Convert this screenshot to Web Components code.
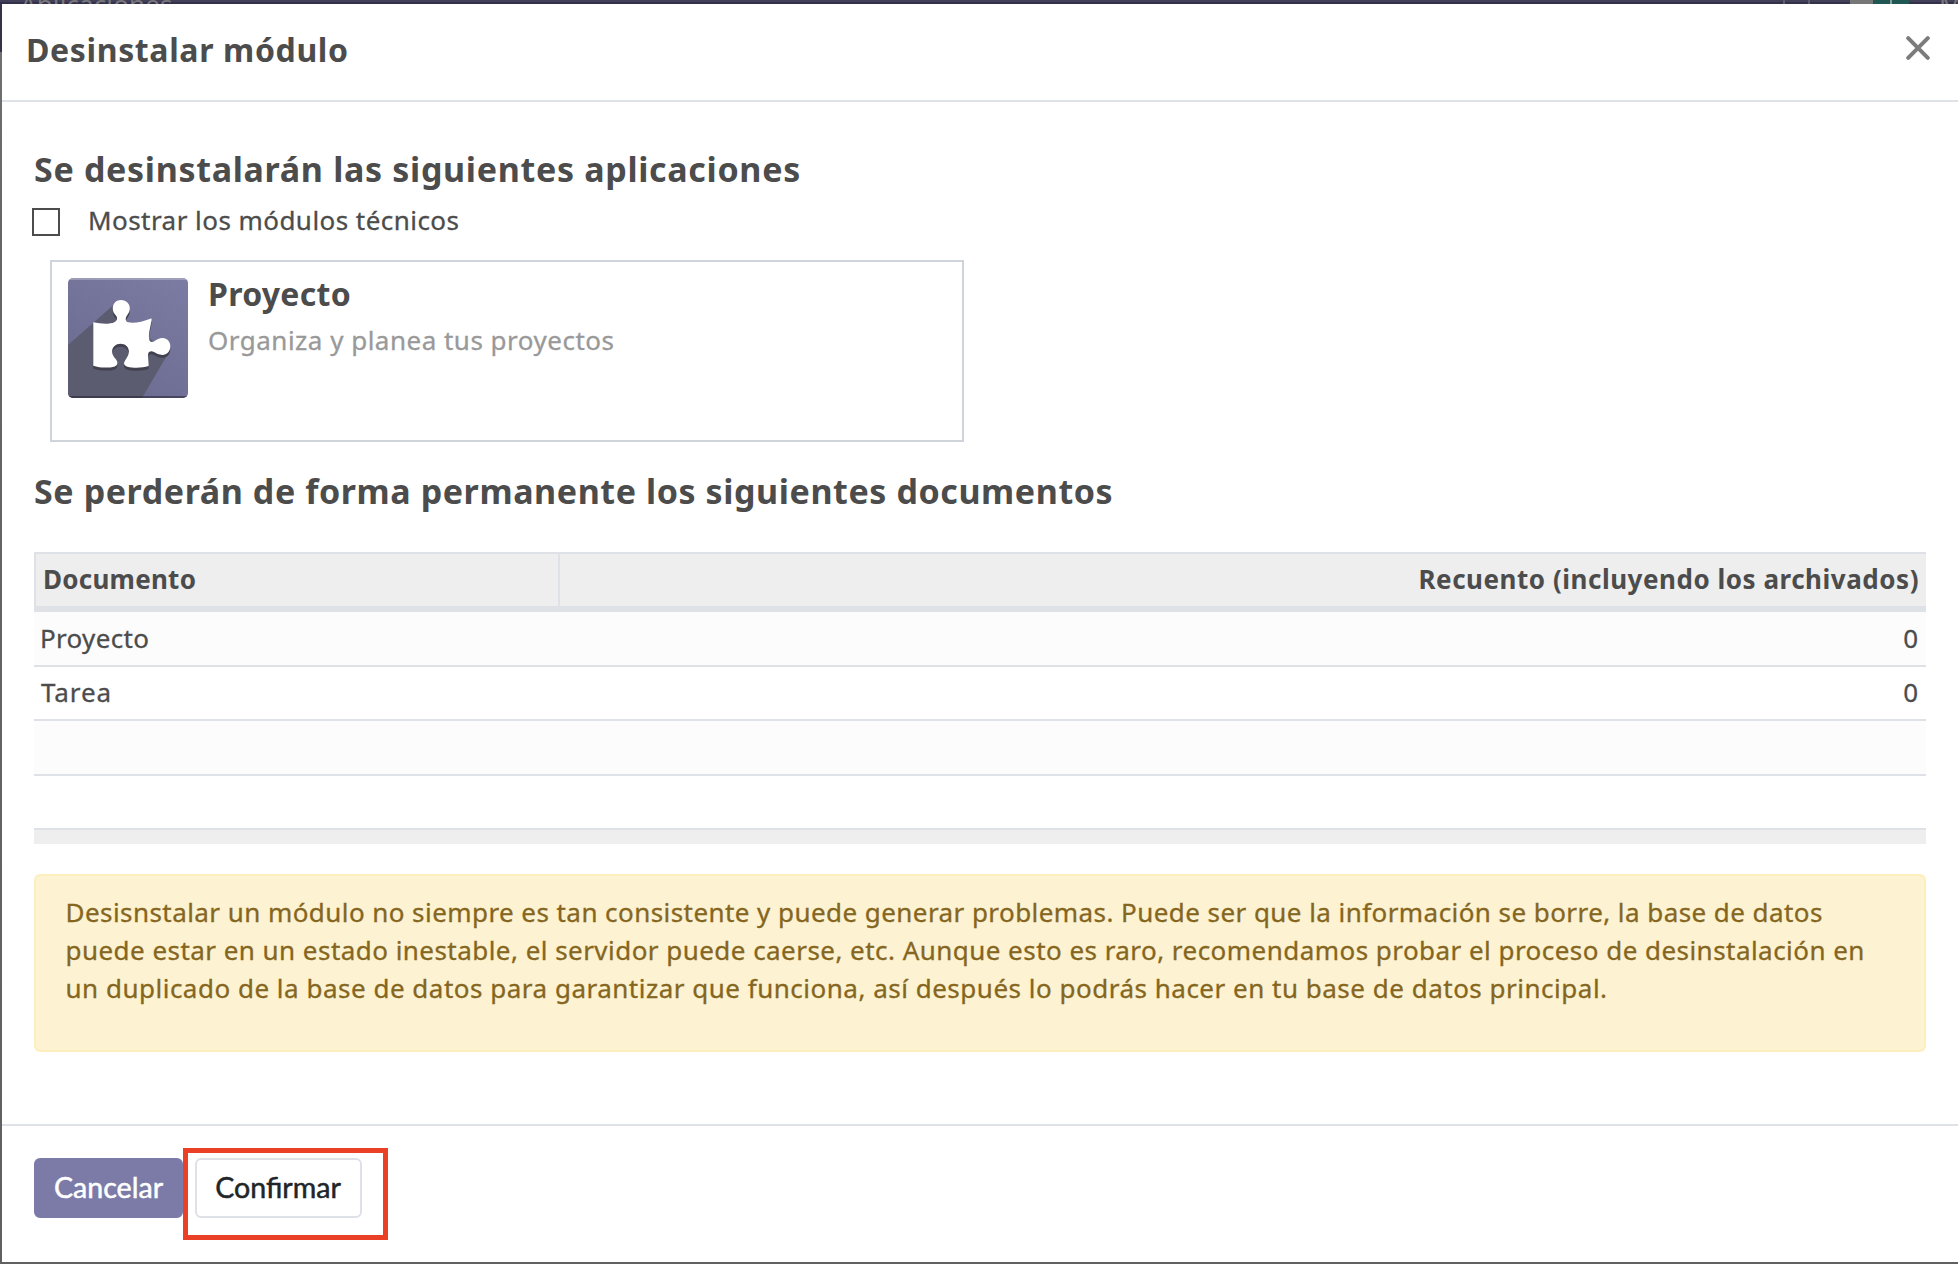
<!DOCTYPE html>
<html lang="es">
<head>
<meta charset="utf-8">
<title>Desinstalar módulo</title>
<style>
html,body{margin:0;height:100%;overflow:hidden}
body{font:26px "Noto Sans","Open Sans",sans-serif;color:#4c4c4c;background:#666}
</style>
</head>
<body>
<uninstall-page></uninstall-page>
<script>
const define = (name, html, setup) => {
  const tpl = document.createElement('template');
  tpl.innerHTML = html;
  customElements.define(name, class extends HTMLElement {
    constructor() {
      super();
      this.attachShadow({mode: 'open'}).append(tpl.content.cloneNode(true));
    }
    connectedCallback() { if (setup) setup(this, this.shadowRoot); }
  });
};

define('app-navbar', `
<style>
:host{display:flex;height:4px;overflow:hidden;background:linear-gradient(#423f59 50%,#33304a 50%);color:#77767a;font-size:26px;line-height:26px}
.brand{margin:-9px 0 0 20px;letter-spacing:.115px;flex:1}
.bits{width:27px;height:4px;border:solid #5d5b6c;border-width:0 2px;box-sizing:border-box;margin-right:40px}
.avatar{width:23px;background:#777}
.badge{width:36px;background:#215753;display:flex;justify-content:center;color:#8b9c9a}
.badge i{width:2px;height:3px;background:#8b9c9a;border-bottom:1px solid #8b9c9a}
.user{margin:-9px 0 0 30px;width:19px;overflow:hidden;white-space:nowrap}
</style>
<div class="brand">Aplicaciones</div><div class="bits"></div><div class="avatar"></div><div class="badge"><i></i></div><div class="user">M</div>`);

define('close-icon', `
<style>:host{display:block;width:24px;height:24px}svg{display:block}</style>
<svg width="24" height="24" viewBox="0 0 24 24"><path d="M2.2 2.2 21.8 21.8M21.8 2.2 2.2 21.8" stroke="#7c7c7c" stroke-width="4" stroke-linecap="round"/></svg>`);

define('puzzle-icon', `
<style>:host{display:block;width:120px;height:120px;flex:none}svg{display:block}</style>
<svg width="120" height="120" viewBox="0 0 120 120">
<defs>
<linearGradient id="g" x1="1" y1="0" x2="0.4" y2="1"><stop offset="0" stop-color="#7c7ba3"/><stop offset="1" stop-color="#6c6b90"/></linearGradient>
<clipPath id="c"><rect width="120" height="120" rx="5"/></clipPath>
<path id="p" d="M25.3 44.2C33 46 42 46.3 46.3 44.2C49.6 42.5 49.9 39.8 47.5 37C45.6 34.7 44.8 33 44.8 30.4C44.8 25.400 48.3 22 53.2 22C58.200 22 61.800 25.600 61.800 30.400C61.800 33.200 60.600 35.200 59 37.400C56.900 40.300 57.300 43.200 60.300 44.300C65.500 45.800 75 43.600 82.300 40.700C83.300 40.400 83.800 40.800 83.600 41.800C82.800 47.600 81 53 80.900 58.200C80.800 63.400 82.900 65.300 86.200 63.300C88.800 61.400 91.200 60 94.600 60C99.300 60 102.300 63.700 102.300 68.300C102.300 73.300 99 76.900 94.300 76.900C91 76.900 88.400 75.600 86 74.100C83.300 72.500 80.600 73.300 80.100 75.900C79.700 78.800 80.800 84 80.600 88C74.500 90.100 65 90.100 59.500 88.700C55.600 87.400 55.200 85.200 57.400 82C59.400 79.100 61 76.500 60.900 73.100C60.600 68.600 57 65.800 52.500 65.800C47.800 65.800 44.300 69 44.100 73.200C44 76.300 45.400 78.400 47.700 81C50.200 84.100 50 87.100 46.800 88.400C41 90.200 31.500 90 25.300 87.700Z"/>
</defs>
<g clip-path="url(#c)">
<rect width="120" height="120" fill="url(#g)"/>
<path d="M45.500 27 0 67V120H74L101 74 84 62 60 45Z" fill="#5c5c71"/>
<rect width="120" height="2" fill="#fff" opacity=".28"/>
<rect y="118" width="120" height="2" fill="#1d1b2c" opacity=".5"/>
<use href="#p" y="3" fill="#41414f"/>
<use href="#p" fill="#fff"/>
</g>
</svg>`);

define('check-row', `
<style>
:host{display:flex;align-items:flex-start;gap:28px;height:28px;margin:17px 0 0 -2px;-webkit-text-stroke:.3px}
i{box-sizing:border-box;width:28px;height:28px;border:2px solid #4c4c4c;background:#fff}
span{line-height:24px;letter-spacing:.449px}
</style><i></i><span><slot></slot></span>`);

define('section-title', `
<style>:host{display:block;font-size:34px;font-weight:700;line-height:44px;white-space:nowrap}</style><slot></slot>`);

define('module-card', `
<style>
:host{display:flex;gap:20px;box-sizing:border-box;width:914px;height:182px;margin:24px 0 27px 16px;padding:16px;border:2px solid #ced4da;background:#fff}
.name{font-size:32px;font-weight:700;line-height:32px;letter-spacing:.3px}
.desc{line-height:36px;margin-top:12px;letter-spacing:.494px;color:#999;-webkit-text-stroke:.3px}
</style>
<puzzle-icon></puzzle-icon>
<div><div class="name"><slot name="name"></slot></div><div class="desc"><slot></slot></div></div>`);

define('record-row', `
<style>
:host{display:flex;justify-content:space-between;box-sizing:border-box;height:54px;padding:0 8px 0 7px;line-height:51px;border-bottom:2px solid #dee2e6;background:#fff;-webkit-text-stroke:.3px}
:host([odd]){height:55px;background:#fcfcfc;line-height:53px;padding-left:6px}
</style><slot></slot>`);

define('record-table', `
<style>
:host{display:block;margin-top:39px}
.head{display:flex;box-sizing:border-box;height:60px;border:solid #dee2e6;border-width:2px 0 6px;background:#eee;font-weight:700;line-height:51px}
.head div{box-sizing:border-box;border-left:2px solid #dee2e6}
.a{width:524px;padding-left:7px;letter-spacing:.25px}
.b{flex:1;text-align:right;padding-right:7px;letter-spacing:.53px}
.foot{height:14px;background:#eee}
</style>
<div class="head"><div class="a"><slot name="a"></slot></div><div class="b"><slot name="b"></slot></div></div>
<slot></slot><div class="foot"></div>`);

define('warning-box', `
<style>
:host{display:block;box-sizing:border-box;height:178px;margin-top:30px;padding:17px 0 0 29.500px;border:2px solid #fceebd;border-radius:6px;background:#fdf2d1;color:#856621;line-height:38px;white-space:nowrap;-webkit-text-stroke:.3px}
</style><slot></slot>`);

define('dialog-button', `
<style>
:host{display:flex;align-items:center;justify-content:center;box-sizing:border-box;width:167px;height:60px;padding-bottom:3px;border:2px solid #dee2e6;border-radius:6px;background:#fff;color:#212529;font:28.600px Lato,sans-serif;-webkit-text-stroke:.5px;position:relative}
:host([primary]){width:149px;background:#7c7ba8;border-color:#7c7ba8;color:#fff}
:host([marked]){padding-right:1px}
.mark{display:none}
:host([marked]) .mark{display:block;position:absolute;left:-14px;top:-12px;width:205px;height:92px;box-sizing:border-box;border:5px solid #ea4025}
</style><slot></slot><div class="mark"></div>`);

define('modal-dialog', `
<style>
:host{display:flex;flex-direction:column;flex:1;background:#fff}
header{display:flex;justify-content:space-between;box-sizing:border-box;height:98px;border-bottom:2px solid #dee2e6;padding:26px 28px 0 24px}
h1{margin:0;font-size:32px;font-weight:700;line-height:40px;letter-spacing:.637px}
close-icon{margin-top:6px}
main{flex:1;padding:45px 32px 0}
footer{display:flex;gap:12px;box-sizing:border-box;height:138px;border-top:2px solid #dee2e6;padding:32px 32px 0}
</style>
<header><h1><slot name="title"></slot></h1><close-icon></close-icon></header>
<main><slot></slot></main>
<footer><slot name="actions"></slot></footer>`);

define('uninstall-page', `
<style>
:host{display:flex;flex-direction:column;height:100vh}
.frame{flex:1;display:flex;padding:0 0 2px 2px;background:linear-gradient(#34314b 48px,#707070 48px,#666 220px,#606060 100%)}
.l1{letter-spacing:.435px}.l2{letter-spacing:.458px}.l3{letter-spacing:.503px}
.p{letter-spacing:.322px}.t{letter-spacing:.9px}
</style>
<app-navbar></app-navbar>
<div class="frame">
<modal-dialog>
  <span slot="title">Desinstalar módulo</span>
  <section-title style="letter-spacing:.685px">Se desinstalarán las siguientes aplicaciones</section-title>
  <check-row>Mostrar los módulos técnicos</check-row>
  <module-card><span slot="name">Proyecto</span>Organiza y planea tus proyectos</module-card>
  <section-title style="letter-spacing:.585px">Se perderán de forma permanente los siguientes documentos</section-title>
  <record-table>
    <span slot="a">Documento</span><span slot="b">Recuento (incluyendo los archivados)</span>
    <record-row odd><span class="p">Proyecto</span><span>0</span></record-row>
    <record-row><span class="t">Tarea</span><span>0</span></record-row>
    <record-row odd></record-row>
    <record-row></record-row>
  </record-table>
  <warning-box><span class="l1">Desisnstalar un módulo no siempre es tan consistente y puede generar problemas. Puede ser que la información se borre, la base de datos</span><br><span class="l2">puede estar en un estado inestable, el servidor puede caerse, etc. Aunque esto es raro, recomendamos probar el proceso de desinstalación en</span><br><span class="l3">un duplicado de la base de datos para garantizar que funciona, así después lo podrás hacer en tu base de datos principal.</span></warning-box>
  <dialog-button slot="actions" primary>Cancelar</dialog-button>
  <dialog-button slot="actions" marked>Confirmar</dialog-button>
</modal-dialog>
</div>`);
</script>
</body>
</html>
